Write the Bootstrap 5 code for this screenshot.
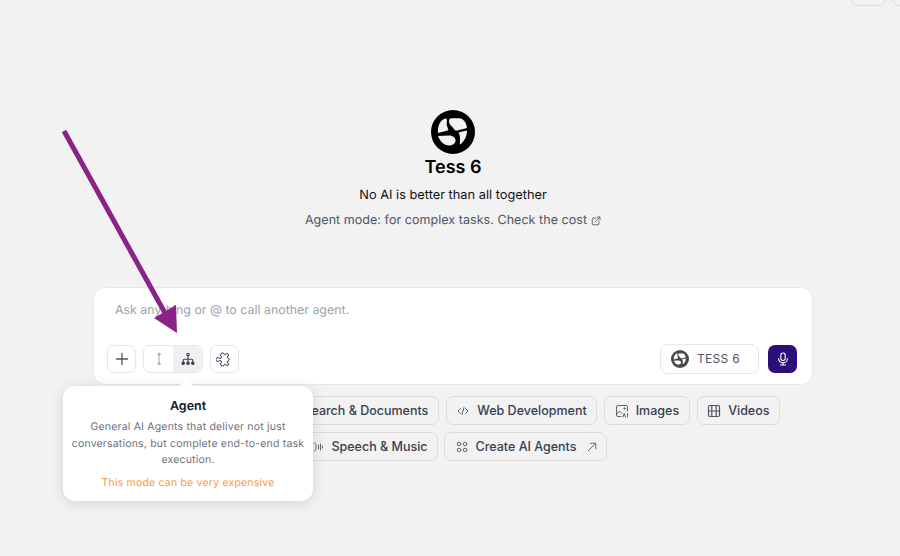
<!DOCTYPE html>
<html lang="en">

<head>
    <meta charset="UTF-8">
    <meta name="viewport" content="width=device-width, initial-scale=1.0">
    <title>Tess 6</title>
    <link href="https://cdn.jsdelivr.net/npm/bootstrap@5.3.3/dist/css/bootstrap.min.css" rel="stylesheet">
    <style>
        html, body { height: 100%; }
        body {
            background: #f2f2f2;
            font-family: Inter, "Liberation Sans", sans-serif;
            color: #111827;
            overflow: hidden;
            position: relative;
            text-rendering: geometricPrecision;
        }
        svg { display: block; flex: none; }
        .line-icon { fill: none; stroke: currentColor; stroke-linecap: round; stroke-linejoin: round; }

        .top-strip { height: 6px; gap: 6px; margin-right: -27px; }
        .top-btn { width: 35px; height: 30px; border: 1px solid #dedede; border-radius: 7px; }

        .hero { width: 720px; margin-left: 93px; padding-top: 104px; }
        .hero-title { font-size: 18px; font-weight: 600; line-height: 24px; margin: 2px 0 0; color: #000; }
        .hero-sub { font-size: 12.8px; line-height: 18px; margin: 7px 0 0; color: #111; }
        .hero-mode { font-size: 12.5px; line-height: 18px; margin: 7px 0 0; color: #4b5563; letter-spacing: .05px; }

        .prompt-box {
            width: 720px; height: 98px; margin: 57px 0 0 93px;
            background: #fff; border: 1px solid #e5e7eb; border-radius: 12px;
            padding: 0 15px 10px 13px;
        }
        .prompt-input {
            height: 56px; resize: none; border: 0; padding: 13px 8px 0; box-shadow: none !important;
            font-size: 12.4px; line-height: 18px; background: transparent;
            text-rendering: geometricPrecision;
        }
        .prompt-input::placeholder { color: #9ca3af; opacity: 1; }

        .gap-tools { gap: 7px; }
        .gap-model { gap: 9px; }
        .tool-btn {
            width: 29px; height: 28px; padding: 0; border: 1px solid #e5e7eb; border-radius: 7px;
            color: #4b5563; background: #fff;
        }
        .tool-btn.is-dark { color: #374151; }
        .mode-group { width: 60px; height: 28px; border: 1px solid #e5e7eb; border-radius: 7px; overflow: hidden; background: #fff; }
        .mode-item { width: 30px; color: #9ca3af; }
        .mode-item.is-on { background: #f0f0f0; color: #374151; }
        .model-btn {
            width: 99px; height: 30px; padding: 0 0 0 10px; border: 1px solid #e5e7eb; border-radius: 8px;
            background: #fff; color: #4b5563; font-size: 12px; letter-spacing: .3px;
        }
        .mic-btn { width: 29px; height: 28px; padding: 0; border: 0; border-radius: 7px; background: #2a0f78; color: #fff; }

        .chip-rows { width: 720px; margin: 11px 0 0 93px; gap: 7px; }
        .chip-row-top { gap: 7px; padding-right: 33px; }
        .chip-row-low { gap: 6px; padding-right: 206px; }
        .chip {
            height: 29px; padding: 1px 9.5px 0; gap: 7px; border: 1px solid #dcdcdc; border-radius: 7px;
            background: transparent; color: #374151; font-size: 12.5px; font-weight: 450; white-space: nowrap;
        }
        .chip svg { color: #4b5563; }
        .chip-go { margin-left: 3px; }

        .tip-box {
            position: absolute; left: 63px; top: 386px; width: 250px; height: 115px;
            background: #fff; border-radius: 12px; padding: 12px 8px 0;
            box-shadow: 0 2px 14px rgba(0, 0, 0, .13);
            text-align: center;
        }
        .tip-box::before {
            content: ""; position: absolute; left: 118px; top: -5px; width: 10px; height: 10px;
            background: #fff; transform: rotate(45deg);
        }
        .tip-title { font-size: 12.5px; font-weight: 600; line-height: 18px; color: #111827; }
        .tip-text { font-size: 10.5px; line-height: 16.5px; margin: 3px 0 0; color: #6b7280; letter-spacing: .2px; }
        .tip-warn { font-size: 10.5px; line-height: 16px; margin: 6px 0 0; color: #fb9a3c; letter-spacing: .2px; }

        .callout-arrow { position: absolute; left: 0; top: 0; pointer-events: none; }
    </style>
</head>

<body>

    <div class="top-strip d-flex justify-content-end align-items-end overflow-hidden">
        <div class="top-btn flex-shrink-0"></div>
        <div class="top-btn flex-shrink-0"></div>
    </div>

    <!-- Heading -->
    <div class="hero d-flex flex-column align-items-center text-center">
        <svg width="44" height="44" viewBox="0 0 44 44">
            <circle cx="22" cy="22" r="22" fill="#000" />
            <path fill="#f2f2f2" d="M7 23C6.500 17 8.500 11 13 9C15 8 16 8.500 16 10.500C15.500 13 15.500 16 17 18.500C18 20 17 20.500 15 21Z" />
            <path fill="#f2f2f2" d="M18 11C18 9 19 8.300 21 8.300L29 8.300C33 9.500 35.500 13 36 18L26 20.500C24.500 21 23.500 20 22.500 18.500C21 16 18 15 18 11Z" />
            <path fill="#f2f2f2" d="M7 26L18 25.500C22 25.500 24.500 28 24.500 30.500C24.500 34 21 35.500 18 35.500C13 35.500 9 31.500 7 26Z" />
            <path fill="#f2f2f2" d="M36 20.500C36 26 33.500 31 29.500 34.500C28.500 34.500 29 31 29 28C29 25.500 28 23.500 27.500 22.500Z" />
        </svg>
        <h1 class="hero-title">Tess 6</h1>
        <p class="hero-sub">No AI is better than all together</p>
        <p class="hero-mode d-flex align-items-center gap-1">Agent mode: for complex tasks. Check the cost
            <svg class="line-icon" width="10" height="10" viewBox="0 0 12 12" stroke-width="1">
                <path d="M6 2.500H2.500a1 1 0 0 0-1 1v6a1 1 0 0 0 1 1h6a1 1 0 0 0 1-1V6" />
                <path d="M5 7l5.500-5.500M7.500 1.200h3.300v3.300" />
            </svg>
        </p>
    </div>

    <!-- Prompt -->
    <div class="prompt-box">
        <textarea class="form-control prompt-input" rows="1" placeholder="Ask anything or @ to call another agent."></textarea>
        <div class="d-flex align-items-center justify-content-between">
            <div class="d-flex gap-tools">
                <button type="button" class="btn tool-btn d-flex align-items-center justify-content-center" aria-label="Add">
                    <svg class="line-icon" width="14" height="14" viewBox="0 0 14 14" stroke-width="1.300"><path d="M7 1.500v11M1.500 7h11" /></svg>
                </button>
                <div class="mode-group d-flex">
                    <div class="mode-item d-flex align-items-center justify-content-center">
                        <svg class="line-icon" width="12" height="14" viewBox="0 0 12 14" stroke-width="1">
                            <circle cx="6" cy="2.200" r="1.100" /><circle cx="6" cy="11.800" r="1.100" /><path d="M6 3.300v7.400" />
                        </svg>
                    </div>
                    <div class="mode-item is-on d-flex align-items-center justify-content-center">
                        <svg class="line-icon" width="14" height="14" viewBox="0 0 14 14" stroke-width="1.100">
                            <circle cx="7" cy="2.500" r="1.300" />
                            <path d="M7 3.800V10M2.200 10V8.400q0-1.200 1.200-1.200h7.200q1.200 0 1.200 1.200V10" />
                            <circle cx="2.200" cy="11.300" r="1.200" fill="currentColor" /><circle cx="7" cy="11.300" r="1.200" fill="currentColor" /><circle cx="11.800" cy="11.300" r="1.200" fill="currentColor" />
                        </svg>
                    </div>
                </div>
                <button type="button" class="btn tool-btn is-dark d-flex align-items-center justify-content-center" aria-label="Extensions">
                    <svg class="line-icon" width="17" height="17" viewBox="0 0 24 24" stroke-width="1.400">
                        <path transform="rotate(45 12 12)" d="M4 7h3a1 1 0 0 0 1-1v-1a2 2 0 0 1 4 0v1a1 1 0 0 0 1 1h3a1 1 0 0 1 1 1v3a1 1 0 0 0 1 1h1a2 2 0 0 1 0 4h-1a1 1 0 0 0-1 1v3a1 1 0 0 1-1 1h-3a1 1 0 0 1-1-1v-1a2 2 0 0 0-4 0v1a1 1 0 0 1-1 1h-3a1 1 0 0 1-1-1v-3a1 1 0 0 1 1-1h1a2 2 0 0 0 0-4h-1a1 1 0 0 1-1-1v-3a1 1 0 0 1 1-1" />
                    </svg>
                </button>
            </div>
            <div class="d-flex align-items-center gap-model">
                <button type="button" class="btn model-btn d-flex align-items-center gap-2">
                    <svg width="18" height="18" viewBox="0 0 44 44">
                        <circle cx="22" cy="22" r="22" fill="#4b4b4b" />
                        <path fill="#fff" d="M7 23C6.500 17 8.500 11 13 9C15 8 16 8.500 16 10.500C15.500 13 15.500 16 17 18.500C18 20 17 20.500 15 21Z" />
                        <path fill="#fff" d="M18 11C18 9 19 8.300 21 8.300L29 8.300C33 9.500 35.500 13 36 18L26 20.500C24.500 21 23.500 20 22.500 18.500C21 16 18 15 18 11Z" />
                        <path fill="#fff" d="M7 26L18 25.500C22 25.500 24.500 28 24.500 30.500C24.500 34 21 35.500 18 35.500C13 35.500 9 31.500 7 26Z" />
                        <path fill="#fff" d="M36 20.500C36 26 33.500 31 29.500 34.500C28.500 34.500 29 31 29 28C29 25.500 28 23.500 27.500 22.500Z" />
                    </svg>
                    TESS 6
                </button>
                <button type="button" class="btn mic-btn d-flex align-items-center justify-content-center" aria-label="Voice">
                    <svg class="line-icon" width="14" height="14" viewBox="0 0 14 14" stroke-width="1.100">
                        <rect x="4.800" y="1" width="4.400" height="7.500" rx="2.200" />
                        <path d="M2.600 6.500a4.400 4.400 0 0 0 8.800 0M7 11v2M4.500 13h5" />
                    </svg>
                </button>
            </div>
        </div>
    </div>

    <!-- Suggestions -->
    <div class="chip-rows d-flex flex-column">
        <div class="chip-row-top d-flex justify-content-end">
            <button type="button" class="btn chip d-flex align-items-center">
                <svg class="line-icon" width="14" height="14" viewBox="0 0 14 14" stroke-width="1"><circle cx="6" cy="6" r="4" /><path d="M9 9l3.500 3.500" /></svg>
                Search &amp; Documents
            </button>
            <button type="button" class="btn chip d-flex align-items-center">
                <svg class="line-icon" width="14" height="14" viewBox="0 0 14 14" stroke-width=".9"><path d="M4.500 4.500L2 7l2.500 2.500M9.500 4.500L12 7 9.500 9.500M8 3.500L6 10.500" /></svg>
                Web Development
            </button>
            <button type="button" class="btn chip d-flex align-items-center">
                <svg class="line-icon" width="14" height="14" viewBox="0 0 14 14" stroke-width=".9">
                    <path d="M6 12.500H3a1.500 1.500 0 0 1-1.500-1.500V3A1.500 1.500 0 0 1 3 1.500h8A1.500 1.500 0 0 1 12.500 3v4" />
                    <path d="M1.800 10l2.700-3 2.500 2.500" /><circle cx="9.500" cy="4.500" r=".7" />
                    <path d="M8 13l1.200-3.500 1.200 3.500M12.500 9.500V13" />
                </svg>
                Images
            </button>
            <button type="button" class="btn chip d-flex align-items-center">
                <svg class="line-icon" width="14" height="14" viewBox="0 0 14 14" stroke-width="1.200">
                    <rect x="1.500" y="1.500" width="11" height="11" rx="1.500" />
                    <path d="M1.500 7h11M4.800 1.500v11M9.200 1.500v11" />
                </svg>
                Videos
            </button>
        </div>
        <div class="chip-row-low d-flex justify-content-end">
            <button type="button" class="btn chip d-flex align-items-center">
                <svg class="line-icon" width="14" height="14" viewBox="0 0 14 14" stroke-width=".9">
                    <path d="M4 3C5.500 3 6 4 6 5.500V8.500C6 10 5.500 11 4 11M8.500 5v4M10.500 4v6M12.500 6v2" />
                </svg>
                Speech &amp; Music
            </button>
            <button type="button" class="btn chip d-flex align-items-center">
                <svg class="line-icon" width="14" height="14" viewBox="0 0 14 14" stroke-width=".9">
                    <circle cx="4" cy="4" r="1.800" /><circle cx="10" cy="4" r="1.800" /><circle cx="4" cy="10" r="1.800" /><circle cx="10" cy="10" r="1.800" />
                </svg>
                Create AI Agents
                <svg class="line-icon chip-go" width="10" height="10" viewBox="0 0 12 12" stroke-width="1"><path d="M1.500 10.500L10.500 1.500M4 1.500h6.500V8" /></svg>
            </button>
        </div>
    </div>

    <!-- Tooltip of the agent mode -->
    <div class="tip-box">
        <div class="tip-title">Agent</div>
        <p class="tip-text">General AI Agents that deliver not just conversations, but complete end-to-end task execution.</p>
        <p class="tip-warn">This mode can be very expensive</p>
    </div>

    <!-- Purple annotation arrow -->
    <svg class="callout-arrow" width="900" height="556" viewBox="0 0 900 556">
        <path d="M64 131L165 313" stroke="#8a2387" stroke-width="5" fill="none" />
        <path d="M154 318L176 305L177 333Z" fill="#8a2387" />
    </svg>

    <script src="https://cdn.jsdelivr.net/npm/bootstrap@5.3.3/dist/js/bootstrap.bundle.min.js"></script>

</body>

</html>
